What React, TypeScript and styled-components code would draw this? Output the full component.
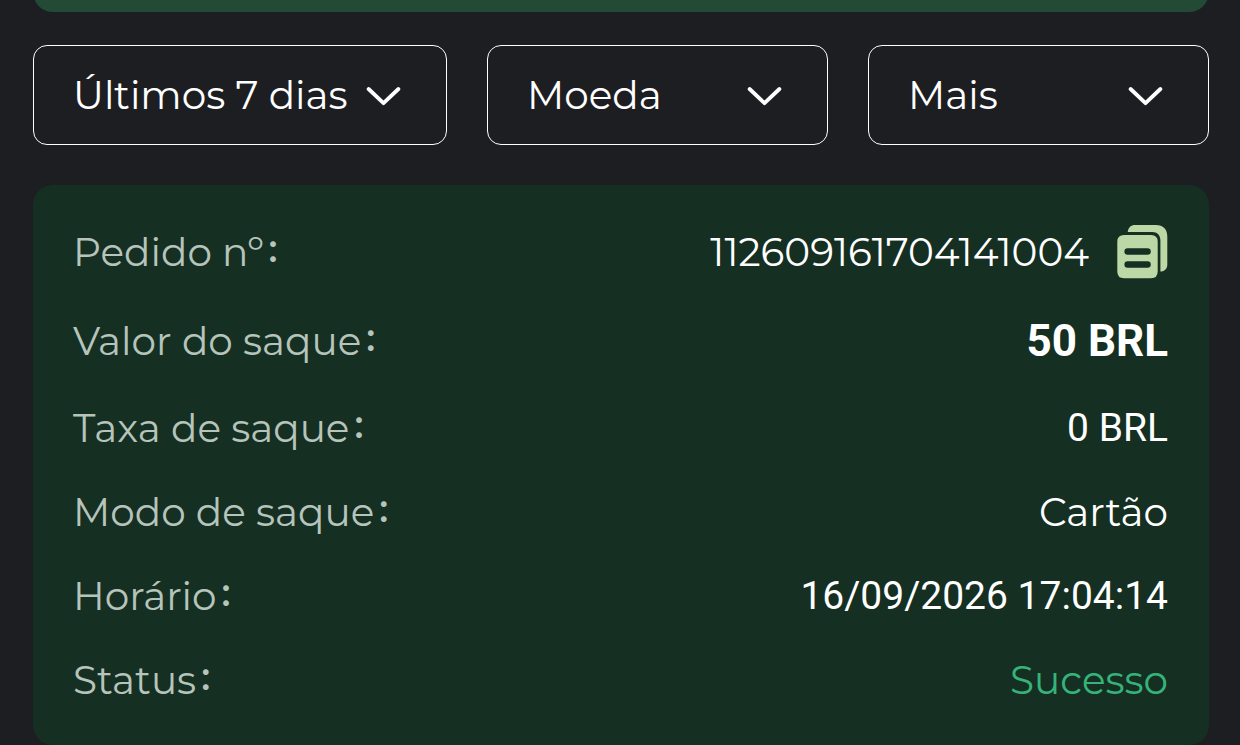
import React from "react";
import styled, { createGlobalStyle, css } from "styled-components";

const GlobalStyle = createGlobalStyle`
  *, *::before, *::after { box-sizing: border-box; }
  body {
    margin: 0;
    background: #1d1e22;
    color: #fff;
    font-family: Montserrat, Inter, "Noto Sans CJK SC", sans-serif;
    font-size: 39px;
    font-weight: 400;
    line-height: 52px;
  }
`;

const Page = styled.main`
  padding: 0 31px 0 33px;
`;

const BannerClip = styled.div`
  display: flex;
  align-items: flex-end;
  height: 12px;
  overflow: hidden;
`;

const Banner = styled.div`
  flex: 1;
  height: 48px;
  border-radius: 20px;
  background: #234a35;
`;

const Filters = styled.form`
  display: grid;
  grid-template-columns: 414fr 341fr 341fr;
  gap: 40px;
  margin: 33px 0 40px;
`;

const FilterField = styled.label`
  display: grid;
  align-items: center;
  min-width: 0;
`;

const FilterSelect = styled.select`
  grid-area: 1 / 1;
  width: 100%;
  height: 100px;
  padding: 0 80px 0 39px;
  appearance: none;
  border: 1px solid #fff;
  border-radius: 14px;
  background: transparent;
  color: #fff;
  font: inherit;

  option {
    background: #1d1e22;
  }
`;

const Chevron = styled.svg`
  grid-area: 1 / 1;
  justify-self: end;
  width: 36px;
  height: 22px;
  margin-right: 45px;
  pointer-events: none;
`;

const Card = styled.dl`
  display: flex;
  flex-direction: column;
  gap: 32px;
  margin: 0;
  padding: 40px 41px 39px 40px;
  border-radius: 20px;
  background: #152f22;
`;

const Row = styled.div<{ $height?: number }>`
  display: flex;
  align-items: center;
  justify-content: space-between;
  min-height: ${({ $height = 52 }) => $height}px;
`;

const Label = styled.dt`
  color: #b6c4bb;
`;

const Colon = styled.span`
  margin-left: 2px;
  font-family: "Noto Sans CJK SC", sans-serif;
  font-size: 30px;
  font-weight: 700;
  line-height: 1;
  vertical-align: 5px;
`;

type Tone = "plain" | "number" | "amount" | "success";

const tones = {
  plain: css``,
  number: css`
    font-family: Roboto, sans-serif;
  `,
  amount: css`
    font-family: Roboto, sans-serif;
    font-size: 44px;
    font-weight: 700;
  `,
  success: css`
    color: #36b37a;
  `,
};

const Value = styled.dd<{ $tone: Tone }>`
  display: flex;
  align-items: center;
  gap: 28px;
  margin: 0;
  ${({ $tone }) => tones[$tone]}
`;

const CopyButton = styled.button`
  display: flex;
  padding: 0;
  border: 0;
  background: none;
  color: #bbd8a6;
  cursor: pointer;
`;

function Filter({ name, options }: { name: string; options: string[] }) {
  return (
    <FilterField>
      <FilterSelect aria-label={name}>
        {options.map((o) => (
          <option key={o}>{o}</option>
        ))}
      </FilterSelect>
      <Chevron viewBox="0 0 36 22" fill="none" aria-hidden="true">
        <path
          d="M2.6 5 17.500 19.200 32.400 5"
          stroke="#fff"
          strokeWidth="3.8"
          strokeLinecap="round"
          strokeLinejoin="round"
        />
      </Chevron>
    </FilterField>
  );
}

function CopyIcon() {
  return (
    <svg width="51" height="54" viewBox="0 0.8 51 54" fill="currentColor" aria-hidden="true">
      <path d="M10.7 7.7C11.3 3.5 14 .8 18 .8H39C46 .8 50.3 5 50.3 12V40.500C50.300 44.500 47.500 47.200 43.400 47.300V16C43.400 11 40.300 7.700 35.300 7.700Z" />
      <path
        fillRule="evenodd"
        d="M7 10.700H34Q40.700 10.700 40.700 17.400V47.300Q40.700 54 34 54H7Q.3 54 .3 47.300V17.400Q.3 10.700 7 10.700ZM10.700 24a3.300 3.300 0 0 0 0 6.600H30.500a3.300 3.300 0 0 0 0-6.600ZM10.700 37a3.300 3.300 0 0 0 0 6.600H30.500a3.300 3.300 0 0 0 0-6.600Z"
      />
    </svg>
  );
}

type FieldProps = {
  label: string;
  tone?: Tone;
  height?: number;
  children: React.ReactNode;
};

function Field({ label, tone = "plain", height, children }: FieldProps) {
  return (
    <Row $height={height}>
      <Label>
        {label}
        <Colon>：</Colon>
      </Label>
      <Value $tone={tone}>{children}</Value>
    </Row>
  );
}

export default function App() {
  return (
    <>
      <GlobalStyle />
      <Page>
        <BannerClip>
          <Banner />
        </BannerClip>
        <Filters>
          <Filter name="Período" options={["Últimos 7 dias"]} />
          <Filter name="Moeda" options={["Moeda"]} />
          <Filter name="Mais filtros" options={["Mais"]} />
        </Filters>
        <Card>
          <Field label="Pedido nº" height={54}>
            112609161704141004
            <CopyButton type="button" aria-label="Copiar número do pedido">
              <CopyIcon />
            </CopyButton>
          </Field>
          <Field label="Valor do saque" tone="amount" height={59}>
            50 BRL
          </Field>
          <Field label="Taxa de saque" tone="number">
            0 BRL
          </Field>
          <Field label="Modo de saque">Cartão</Field>
          <Field label="Horário" tone="number">
            16/09/2026 17:04:14
          </Field>
          <Field label="Status" tone="success">
            Sucesso
          </Field>
        </Card>
      </Page>
    </>
  );
}
